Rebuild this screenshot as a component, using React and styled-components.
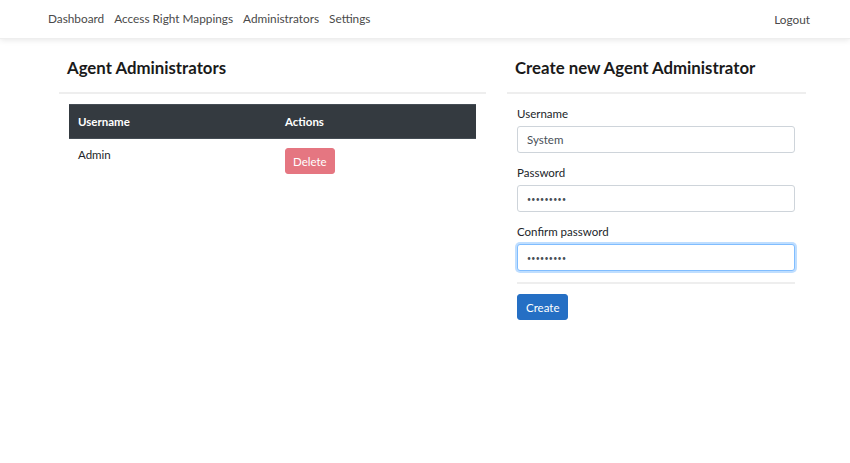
import React from 'react'
import styled, { createGlobalStyle } from 'styled-components'

const GlobalStyle = createGlobalStyle`
  body {
    margin: 0;
    background: #fff;
    font-family: Lato, "Open Sans", sans-serif;
    color: #212529;
  }
`

const Navbar = styled.nav`
  display: flex;
  align-items: center;
  justify-content: space-between;
  height: 39px;
  padding: 0 40px 0 48px;
  background: #fff;
  box-shadow: 0 1px 6px rgba(0, 0, 0, 0.1);
  border-bottom: 1px solid #eee;
  box-sizing: border-box;
`

const NavLinks = styled.div`
  display: flex;
  gap: 10px;
  margin-top: -2px;
`

const NavLink = styled.a`
  font-size: 11.8px;
  color: #4a4a4a;
  text-decoration: none;
`

const Main = styled.div`
  display: grid;
  grid-template-columns: 427px 299px;
  gap: 21px;
  padding: 0 0 0 59px;
`

const Column = styled.section`
  display: flex;
  flex-direction: column;
`

const Header = styled.div`
  height: 55px;
  display: flex;
  align-items: center;
  padding: 3px 8px 0;
  border-bottom: 2px solid #eeeeee;
  box-sizing: border-box;
`

const Title = styled.h2`
  margin: 0;
  font-size: 16.8px;
  font-weight: 700;
  color: #1a1a1a;
`

const Table = styled.table`
  margin: 10px 10px 0;
  width: 407px;
  border-collapse: collapse;
  font-size: 11.5px;
`

const Th = styled.th`
  background: #343a40;
  color: #fff;
  text-align: left;
  font-weight: 700;
  height: 33px;
  padding: 0 9px;
  border: 1px solid #454d55;
  border-left: none;
  border-right: none;
  width: ${p => p.$width || 'auto'};
`

const Td = styled.td`
  padding: 9px 9px 8px;
  vertical-align: top;
  color: #212529;
`

const Button = styled.button`
  font-family: inherit;
  font-size: 11.5px;
  color: #fff;
  border: 1px solid ${p => p.$bg};
  background: ${p => p.$bg};
  border-radius: 3px;
  height: 26px;
  padding: 0 ${p => p.$pad || '8px'};
  cursor: pointer;
`

const Form = styled.form`
  display: flex;
  flex-direction: column;
  padding: 13px 11px 0 10px;
`

const Field = styled.div`
  display: flex;
  flex-direction: column;
  margin-bottom: 13px;
`

const Label = styled.label`
  font-size: 11.5px;
  margin-bottom: 6px;
  color: #212529;
`

const Input = styled.input`
  height: 27px;
  box-sizing: border-box;
  border: 1px solid ${p => (p.$focus ? '#80bdff' : '#ced4da')};
  box-shadow: ${p => (p.$focus ? '0 0 0 2px rgba(0,123,255,.25)' : 'none')};
  border-radius: 3px;
  padding: 0 9px;
  font-family: inherit;
  font-size: ${p => (p.type === 'password' ? '7px' : '11.5px')};
  letter-spacing: ${p => (p.type === 'password' ? '0.3px' : '0')};
  color: #495057;
  outline: none;
`

const Divider = styled.hr`
  border: none;
  border-top: 2px solid #eeeeee;
  margin: -2px 0 10px;
`

const Actions = styled.div`
  display: flex;
`

export default function App() {
  return (
    <>
      <GlobalStyle />
      <Navbar>
        <NavLinks>
          <NavLink href="#">Dashboard</NavLink>
          <NavLink href="#">Access Right Mappings</NavLink>
          <NavLink href="#">Administrators</NavLink>
          <NavLink href="#">Settings</NavLink>
        </NavLinks>
        <NavLink href="#">Logout</NavLink>
      </Navbar>
      <Main>
        <Column>
          <Header>
            <Title>Agent Administrators</Title>
          </Header>
          <Table>
            <thead>
              <tr>
                <Th $width="189px">Username</Th>
                <Th>Actions</Th>
              </tr>
            </thead>
            <tbody>
              <tr>
                <Td>Admin</Td>
                <Td>
                  <Button type="button" $bg="#e57681" $pad="7px">Delete</Button>
                </Td>
              </tr>
            </tbody>
          </Table>
        </Column>
        <Column>
          <Header>
            <Title>Create new Agent Administrator</Title>
          </Header>
          <Form onSubmit={e => e.preventDefault()}>
            <Field>
              <Label>Username</Label>
              <Input defaultValue="System" />
            </Field>
            <Field>
              <Label>Password</Label>
              <Input type="password" defaultValue="123456789" />
            </Field>
            <Field>
              <Label>Confirm password</Label>
              <Input type="password" defaultValue="123456789" $focus />
            </Field>
            <Divider />
            <Actions>
              <Button type="submit" $bg="#256fc4">Create</Button>
            </Actions>
          </Form>
        </Column>
      </Main>
    </>
  )
}
